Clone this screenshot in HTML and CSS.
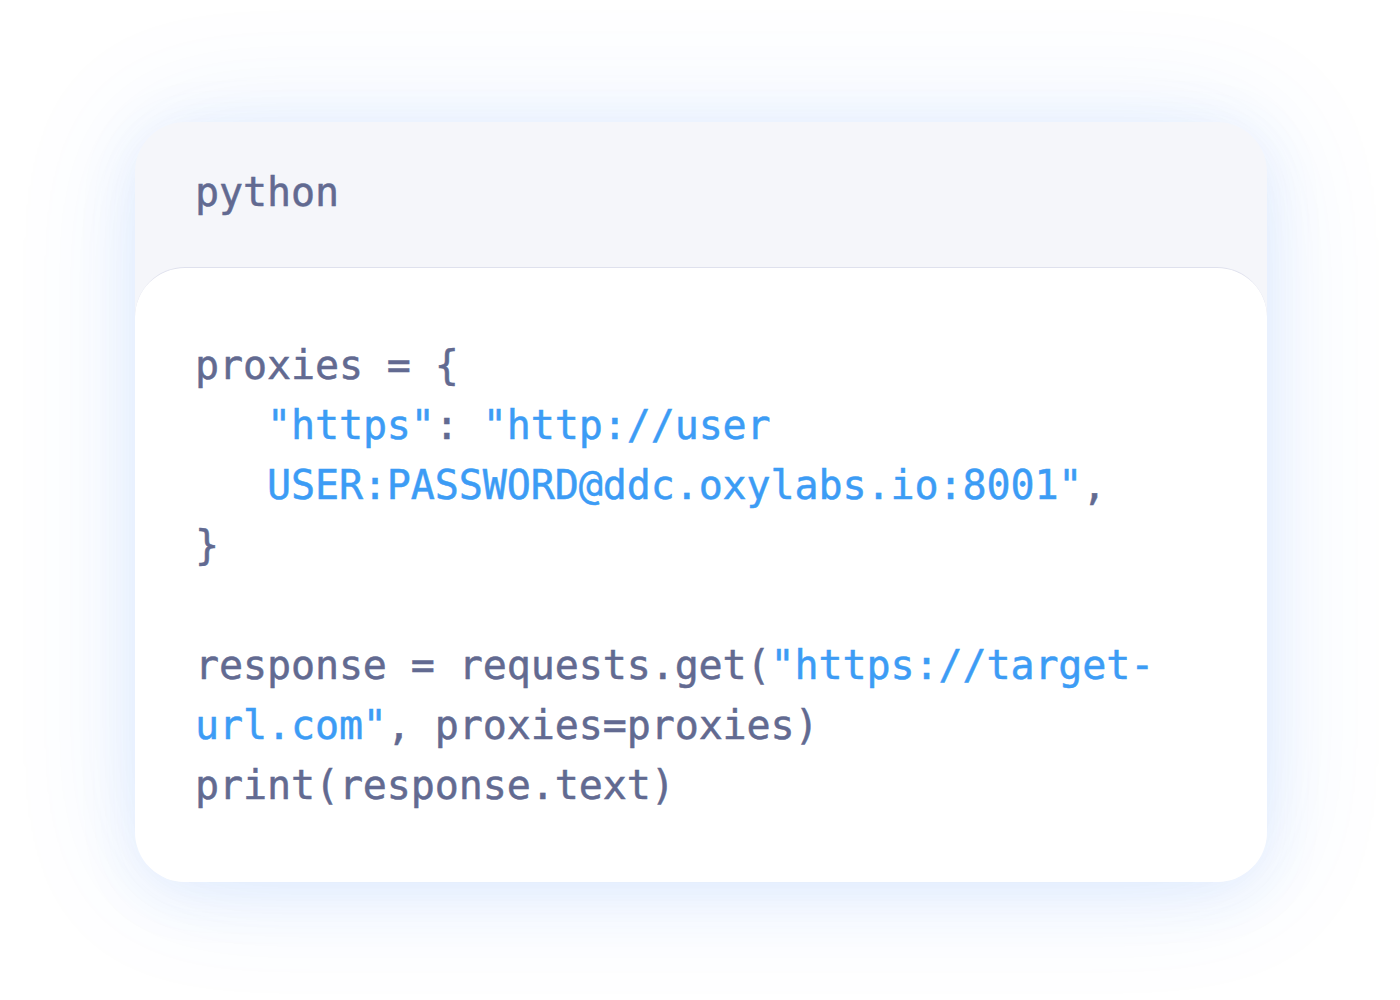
FILE: index.html
```html
<!DOCTYPE html>
<html>
<head>
<meta charset="utf-8">
<link rel="stylesheet" href="styles.css">
</head>
<body>
<div class="stage">
  <div class="card">
    <div class="card-head">python</div>
    <div class="card-body"><pre class="code"><span class="t">proxies = {</span>
   <span class="s">"https"</span><span class="t">:</span> <span class="s">"http://user</span>
   <span class="s">USER:PASSWORD@ddc.oxylabs.io:8001"</span><span class="t">,</span>
<span class="t">}</span>

<span class="t">response = requests.get(</span><span class="s">"https://target-</span>
<span class="s">url.com"</span><span class="t">, proxies=proxies)</span>
<span class="t">print(response.text)</span></pre></div>
  </div>
</div>
</body>
</html>
```
FILE: styles.css
```css
html, body {
  margin: 0;
  padding: 0;
  background: #ffffff;
}
.stage {
  height: 1000px;
  box-sizing: border-box;
  padding: 122px 0 0 135px;
  overflow: hidden;
}
.card {
  width: 1132px;
  height: 760px;
  border-radius: 50px;
  background: #f5f6fa;
  box-shadow: 0 10px 60px rgba(40, 120, 250, 0.10), 0 0 130px rgba(40, 120, 250, 0.10);
  display: flex;
  flex-direction: column;
  font-family: "DejaVu Sans Mono", "Liberation Mono", monospace;
  font-size: 40px;
  line-height: 60px;
  color: #626a91;
  -webkit-text-stroke: 0.5px currentColor;
}
.card-head {
  height: 145px;
  box-sizing: border-box;
  padding: 40px 60px 0 60px;
  letter-spacing: -0.1px;
}
.card-body {
  flex: 1;
  background: #ffffff;
  border-radius: 50px;
  border-top: 1.5px solid #dfe1ed;
  box-sizing: border-box;
  padding: 67px 60px 0 60px;
}
.code {
  margin: 0;
  font: inherit;
  white-space: pre;
  letter-spacing: -0.1px;
}
.t { color: #626a91; }
.s { color: #3c9cf5; }
```
